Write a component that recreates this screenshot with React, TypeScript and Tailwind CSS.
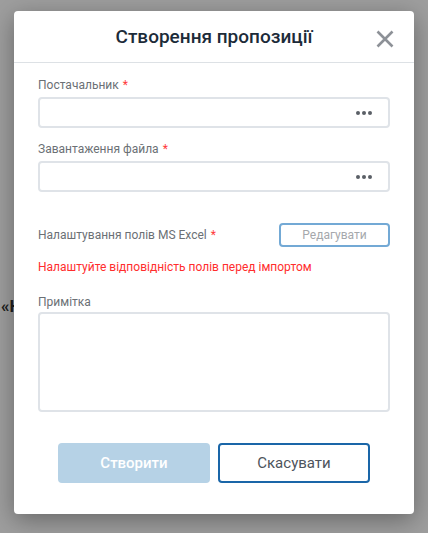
import React from 'react';

const font = { fontFamily: 'Roboto, "Noto Sans", Arial, sans-serif' };

const Label: React.FC<{ text: string; required?: boolean }> = ({ text, required }) => (
  <div className="text-[12px] leading-4 text-[#6b7075]">
    {text}
    {required && <span className="ml-1 text-[#ff3b3b]">*</span>}
  </div>
);

const Dots: React.FC = () => (
  <div className="flex items-center gap-[2px]">
    <span className="w-[4px] h-[4px] rounded-full bg-[#5a5f66]" />
    <span className="w-[4px] h-[4px] rounded-full bg-[#5a5f66]" />
    <span className="w-[4px] h-[4px] rounded-full bg-[#5a5f66]" />
  </div>
);

const PickerInput: React.FC = () => (
  <div className="mt-1 h-[31px] w-full rounded-[4px] border-2 border-[#dfe3e8] bg-white flex items-center justify-end pr-[16px]">
    <Dots />
  </div>
);

const App: React.FC = () => {
  return (
    <div className="relative w-[428px] h-[533px] overflow-hidden bg-white" style={font}>
      {/* page behind the modal */}
      <div className="pt-[294px] pl-[1px] text-[17px] font-bold text-[#333]">«Н</div>

      {/* overlay */}
      <div className="absolute inset-0 bg-black/[0.38] flex justify-center items-start pt-[11px]">
        <div className="w-[400px] bg-white rounded-[4px] shadow-[0_6px_24px_rgba(0,0,0,0.35)]">
          {/* header */}
          <div className="relative h-[52px] border-b border-[#dde1e5] flex items-center justify-center">
            <h2 className="text-[19px] font-medium text-[#1c2b39] mt-[2px]">Створення пропозиції</h2>
            <button className="absolute right-[20px] top-[19px] text-[#8d9197]">
              <svg width="18" height="18" viewBox="0 0 18 18" fill="none">
                <path d="M1.5 1.5L16.5 16.5M16.5 1.5L1.5 16.5" stroke="currentColor" strokeWidth="2.6" />
              </svg>
            </button>
          </div>

          {/* body */}
          <div className="px-6 pt-[14px] pb-[31px]">
            <Label text="Постачальник" required />
            <PickerInput />

            <div className="mt-[13px]">
              <Label text="Завантаження файла" required />
              <PickerInput />
            </div>

            <div className="mt-[31px] flex items-center justify-between">
              <Label text="Налаштування полів MS Excel" required />
              <button className="w-[111px] h-[24px] rounded-[4px] border-2 border-[#73a9d5] text-[12px] text-[#a5a8ac] leading-none">
                Редагувати
              </button>
            </div>
            <div className="mt-[12px] text-[12px] leading-4 text-[#ff2d2d]">
              Налаштуйте відповідність полів перед імпортом
            </div>

            <div className="mt-[19px]">
              <Label text="Примітка" />
              <textarea className="mt-[2px] block h-[100px] w-full resize-none rounded-[4px] border-2 border-[#dfe3e8] outline-none" />
            </div>

            <div className="mt-[31px] flex justify-center gap-2">
              <button className="w-[152px] h-[40px] rounded-[4px] bg-[#b6d2e6] text-white text-[15px] font-medium">
                Створити
              </button>
              <button className="w-[152px] h-[40px] rounded-[4px] border-2 border-[#1a66a8] text-[#4d545c] text-[15px]">
                Скасувати
              </button>
            </div>
          </div>
        </div>
      </div>
    </div>
  );
};

export default App;
